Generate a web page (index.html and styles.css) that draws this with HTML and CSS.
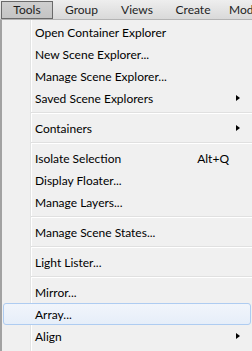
FILE: index.html
```html
<!DOCTYPE html>
<html lang="en">
<head>
  <meta charset="UTF-8" />
  <title>Tools Menu</title>
  <link rel="stylesheet" href="styles.css">
</head>
<body>
  <!-- Menu bar -->
  <div class="menubar">
    <span class="bar-item open">Tools</span>
    <span class="bar-item group">Group</span>
    <span class="bar-item views">Views</span>
    <span class="bar-item create">Create</span>
    <span class="bar-item mod">Modifiers</span>
  </div>

  <!-- Dropdown -->
  <div class="menu">
    <div class="item">Open Container Explorer</div>
    <div class="item">New Scene Explorer...</div>
    <div class="item">Manage Scene Explorer...</div>
    <div class="item sub">Saved Scene Explorers</div>
    <div class="sep"></div>
    <div class="item sub">Containers</div>
    <div class="sep"></div>
    <div class="item">Isolate Selection <span class="key">Alt+Q</span></div>
    <div class="item">Display Floater...</div>
    <div class="item">Manage Layers...</div>
    <div class="sep"></div>
    <div class="item">Manage Scene States...</div>
    <div class="sep"></div>
    <div class="item">Light Lister...</div>
    <div class="sep"></div>
    <div class="item">Mirror...</div>
    <div class="item hover">Array...</div>
    <div class="item sub">Align</div>
  </div>
</body>
</html>
```

FILE: styles.css
```css
/* Global */
* { box-sizing: border-box; margin: 0; padding: 0; }
body {
  width: 252px;
  height: 351px;
  overflow: hidden;
  background: #f0f0f0;
  font-family: 'Lato', 'Noto Sans', sans-serif;
  font-size: 12px;
  color: #000;
}

/* Menu bar */
.menubar {
  display: flex;
  height: 20px;
  padding-top: 1px;
  white-space: nowrap;
  overflow: hidden;
  background: linear-gradient(#eeeeee, #d9d9d9);
  border-bottom: 1px solid #b4b4b4;
}
.bar-item {
  flex: none;
  height: 18px;
  line-height: 16px;
  text-align: center;
  border: 1px solid transparent;
  color: #1e1e1e;
}
.bar-item.open {
  margin-left: 1px;
  width: 52px;
  background: linear-gradient(#cfcfcf, #c4c4c4);
  border-color: #6a6a6a;
}
.bar-item.group { width: 57px; }
.bar-item.views { width: 54px; }
.bar-item.create { width: 58px; }
.bar-item.mod { padding-left: 6px; text-align: left; }

/* Dropdown */
.menu {
  height: 331px;
  padding-top: 1px;
  border-left: 2px solid #a2a2a2;
  background:
    linear-gradient(to right, transparent 28px, #e2e3e3 28px, #e2e3e3 29px, #ffffff 29px, #ffffff 30px, transparent 30px),
    #f0f0f0;
}
.item {
  display: flex;
  align-items: center;
  height: 22px;
  margin-right: 1px;
  padding-left: 32px;
  padding-right: 20px;
  border: 1px solid transparent;
  border-radius: 3px;
  position: relative;
}
.item .key {
  margin-left: auto;
  padding-right: 1px;
}
.item.sub::after {
  content: "";
  position: absolute;
  right: 10px;
  top: 7px;
  border-left: 4px solid #000;
  border-top: 3.5px solid transparent;
  border-bottom: 3.5px solid transparent;
}
.item.hover {
  margin-left: 1px;
  padding-left: 31px;
  margin-right: 1px;
  border-color: #aeccf1;
  background: linear-gradient(#f1f5fb, #e6eef9);
}
.sep {
  height: 8px;
  margin-left: 29px;
  background: linear-gradient(transparent 3px, #e0e0e0 3px, #e0e0e0 4px, #ffffff 4px, #ffffff 5px, transparent 5px);
}
```
